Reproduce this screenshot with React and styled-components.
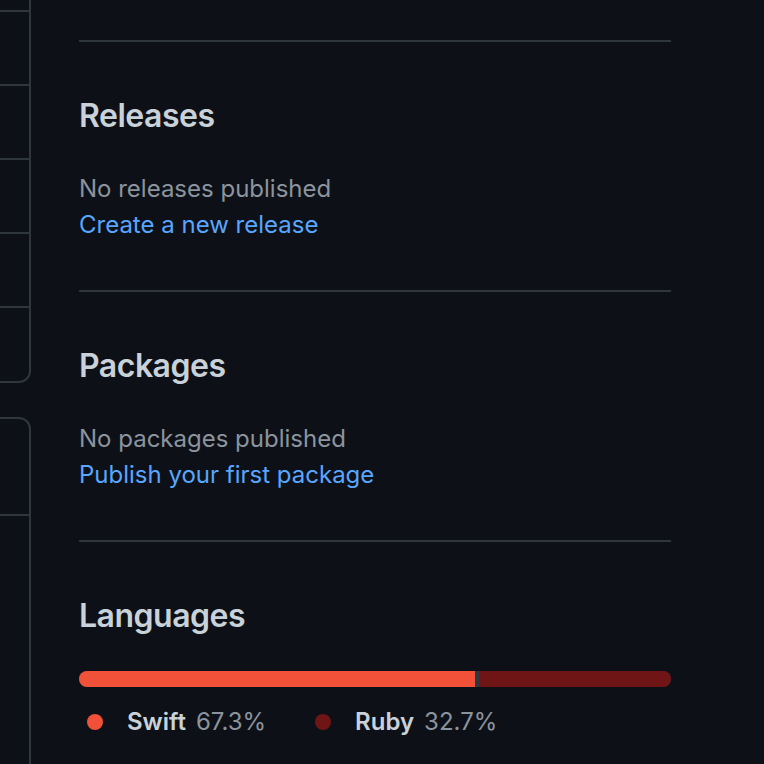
import React from "react";
import styled, { createGlobalStyle } from "styled-components";

const languages = [
    { name: "Swift", percent: 67.3, color: "#f05138" },
    { name: "Ruby", percent: 32.7, color: "#701516" },
];

const App = () => {
    return (
        <>
            <GlobalStyle />
            <PageWithStyled>
                <SidebarWithStyled>
                    <NavBoxWithStyled $top={-64}>
                        <NavRowWithStyled />
                        <NavRowWithStyled />
                        <NavRowWithStyled />
                        <NavRowWithStyled />
                        <NavRowWithStyled />
                        <NavRowWithStyled $height={73} />
                    </NavBoxWithStyled>
                    <NavBoxWithStyled $top={34}>
                        <NavRowWithStyled $height={95} />
                        <NavRowWithStyled $height={300} />
                    </NavBoxWithStyled>
                </SidebarWithStyled>

                <MainWithStyled>
                    <SectionWithStyled>
                        <HeadingWithStyled>Releases</HeadingWithStyled>
                        <MutedWithStyled>No releases published</MutedWithStyled>
                        <LinkWithStyled href="#">Create a new release</LinkWithStyled>
                    </SectionWithStyled>

                    <SectionWithStyled>
                        <HeadingWithStyled>Packages</HeadingWithStyled>
                        <MutedWithStyled>No packages published</MutedWithStyled>
                        <LinkWithStyled href="#">Publish your first package</LinkWithStyled>
                    </SectionWithStyled>

                    <SectionWithStyled>
                        <HeadingWithStyled>Languages</HeadingWithStyled>
                        <BarWithStyled>
                            {languages.map((lang) => (
                                <BarPartWithStyled
                                    key={lang.name}
                                    $color={lang.color}
                                    style={{ width: lang.percent + "%" }}
                                />
                            ))}
                        </BarWithStyled>
                        <LegendWithStyled>
                            {languages.map((lang) => (
                                <LegendItemWithStyled key={lang.name}>
                                    <DotWithStyled viewBox="0 0 16 16" $color={lang.color}>
                                        <circle cx="8" cy="8" r="4" />
                                    </DotWithStyled>
                                    <LangNameWithStyled>{lang.name}</LangNameWithStyled>
                                    <PercentWithStyled>{lang.percent}%</PercentWithStyled>
                                </LegendItemWithStyled>
                            ))}
                        </LegendWithStyled>
                    </SectionWithStyled>
                </MainWithStyled>
            </PageWithStyled>
        </>
    );
};

const GlobalStyle = createGlobalStyle`
    html, body {
        margin: 0;
        padding: 0;
        background: #0d1117;
    }
    body {
        font-family: Inter, "Liberation Sans", sans-serif;
        -webkit-font-smoothing: antialiased;
    }
`;

const PageWithStyled = styled.div`
    display: flex;
    width: 764px;
    height: 764px;
    overflow: hidden;
    background: #0d1117;
`;

const SidebarWithStyled = styled.div`
    flex: 0 0 31px;
    width: 31px;
    display: flex;
    flex-direction: column;
`;

const NavBoxWithStyled = styled.div`
    flex: none;
    box-sizing: border-box;
    width: 300px;
    margin-left: -269px;
    margin-top: ${(props) => props.$top}px;
    border: 2px solid #30363d;
    border-radius: 12px;
    overflow: hidden;
`;

const NavRowWithStyled = styled.div`
    height: ${(props) => props.$height || 72}px;
    border-top: 2px solid #30363d;

    &:first-child {
        border-top: none;
    }
`;

const MainWithStyled = styled.div`
    flex: none;
    width: 592px;
    margin-left: 48px;
    padding-top: 40px;
`;

const SectionWithStyled = styled.div`
    height: 250px;
    border-top: 2px solid #30363d;
    padding-top: 50px;
    box-sizing: border-box;
`;

const HeadingWithStyled = styled.h2`
    margin: 0 0 31px;
    font-size: 32px;
    line-height: 48px;
    font-weight: 600;
    letter-spacing: -0.5px;
    color: #c9d1d9;
`;

const MutedWithStyled = styled.div`
    font-size: 24px;
    line-height: 36px;
    color: #8b949e;
`;

const LinkWithStyled = styled.a`
    display: block;
    font-size: 24px;
    line-height: 36px;
    color: #58a6ff;
    text-decoration: none;
`;

const BarWithStyled = styled.div`
    display: flex;
    height: 16px;
    margin-top: 29px;
    border-radius: 8px;
    overflow: hidden;
    background: #30363d;
    gap: 4px;
`;

const BarPartWithStyled = styled.span`
    display: block;
    background: ${(props) => props.$color};
`;

const LegendWithStyled = styled.ul`
    display: flex;
    margin: 17px 0 0;
    padding: 0;
    list-style: none;
`;

const LegendItemWithStyled = styled.li`
    display: flex;
    align-items: center;
    margin-right: 41px;
    font-size: 24px;
    line-height: 36px;
`;

const DotWithStyled = styled.svg`
    width: 32px;
    height: 32px;
    margin-right: 16px;
    fill: ${(props) => props.$color};
`;

const LangNameWithStyled = styled.span`
    font-weight: 600;
    color: #c9d1d9;
    margin-right: 10px;
`;

const PercentWithStyled = styled.span`
    color: #8b949e;
`;

export default App;
